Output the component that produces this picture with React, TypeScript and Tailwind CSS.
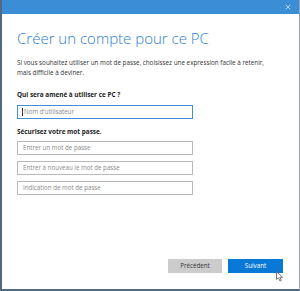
import { X } from "lucide-react";

export default function App() {
  return (
    <div
      className="relative flex h-[291px] w-[300px] flex-col overflow-hidden bg-white"
      style={{ fontFamily: '"Open Sans", "Noto Sans", sans-serif' }}
    >
      <div className="flex h-[291px] flex-col border-b-2 border-l-2 border-r border-[#506a85] border-r-[#9aa4ae]">
        <div className="flex h-[14px] shrink-0 items-center justify-end bg-[#3b8ed6] pr-[7px]">
          <X size={8} strokeWidth={2.5} className="text-[#cfe3f5]" />
        </div>

        <div className="flex flex-1 flex-col pl-[15px] pr-3">
          <h1 className="mt-[14px] text-[15px] leading-[20px] font-light text-[#2b7fd1]">
            Créer un compte pour ce PC
          </h1>

          <p className="mt-[10px] text-[6.3px] leading-[10px] text-[#333]">
            Si vous souhaitez utiliser un mot de passe, choisissez une expression facile à retenir,
            <br />
            mais difficile à deviner.
          </p>

          <p className="mt-[12px] text-[6.4px] leading-[10px] font-bold text-[#222]">
            Qui sera amené à utiliser ce PC ?
          </p>
          <div className="mt-[5px] flex h-[14px] w-[176px] items-center border border-[#3f8fd8] bg-[#fffefa] pl-[4px] text-[6.2px] text-[#8a8a8a]">
            <span className="mr-[1px] h-[8px] w-px bg-[#333]" />
            Nom d'utilisateur
          </div>

          <p className="mt-[8px] text-[6.4px] leading-[10px] font-bold text-[#222]">
            Sécurisez votre mot passe.
          </p>
          <div className="mt-[4px] flex flex-col gap-[6px]">
            {["Entrer un mot de passe", "Entrer à nouveau le mot de passe", "Indication de mot de passe"].map(
              (label) => (
                <div
                  key={label}
                  className="flex h-[14px] w-[176px] items-center border border-[#b9b9b9] bg-white pl-[5px] text-[6.2px] text-[#8a8a8a]"
                >
                  {label}
                </div>
              )
            )}
          </div>

          <div className="mt-auto mb-[16px] flex justify-end gap-[6px] pr-[4px]">
            <button className="h-[14px] w-[54px] bg-[#cccccc] text-[6.2px] text-[#333]">Précédent</button>
            <button className="h-[14px] w-[55px] bg-[#0a78d7] text-[6.2px] text-white">Suivant</button>
          </div>
        </div>
      </div>

      <svg className="absolute left-[276px] top-[271px]" width="8" height="11" viewBox="0 0 8 11">
        <path d="M0.5 0.5 L0.5 8.5 L2.5 6.8 L4 10 L5.3 9.4 L3.9 6.3 L6.6 6.3 Z" fill="#fff" stroke="#555" strokeWidth="0.8" />
      </svg>
    </div>
  );
}
